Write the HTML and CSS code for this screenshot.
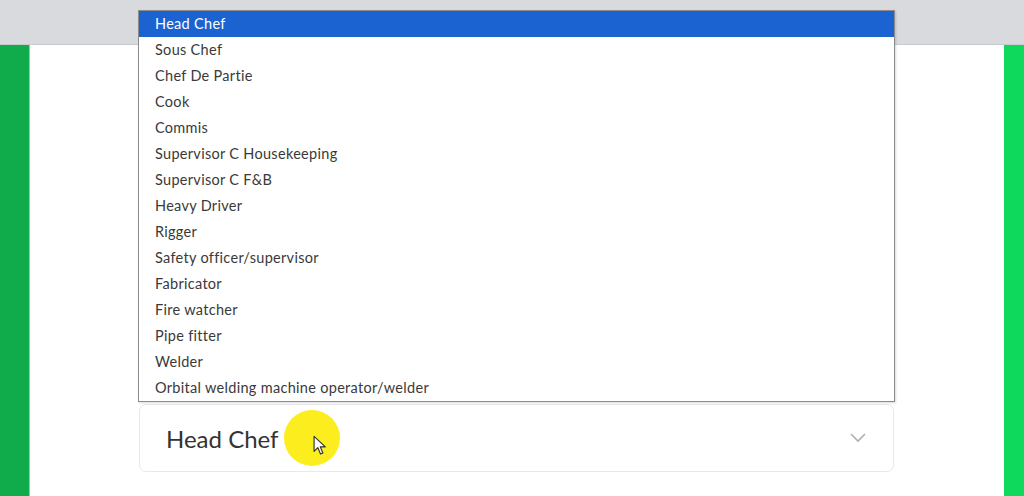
FILE: index.html
```html
<!DOCTYPE html>
<html lang="en">
<head>
    <meta charset="UTF-8">
    <title>Position</title>
    <link rel="stylesheet" href="styles.css">
</head>
<body>
    <div class="topbar"></div>
    <div class="page">
        <div class="side side-left"></div>
        <div class="main">
            <!-- closed select field -->
            <div class="select-box">
                <span class="select-value">Head Chef</span>
                <svg class="chevron" width="18" height="12" viewBox="0 0 18 12">
                    <path d="M2 2 L9 9 L16 2" fill="none" stroke="#b0b0b0" stroke-width="1.6"/>
                </svg>
                <span class="cursor-spot"></span>
                <svg class="cursor" width="15" height="22" viewBox="0 0 14 20">
                    <path d="M1 1 L1 15 L4.5 11.5 L7 17.5 L9.2 16.5 L6.8 10.8 L11.5 10.8 Z" fill="#fff" stroke="#333" stroke-width="1.1" stroke-linejoin="round"/>
                </svg>
            </div>
        </div>
        <div class="side side-right"></div>
    </div>

    <!-- open option list -->
    <ul class="option-list">
        <li class="selected">Head Chef</li>
        <li>Sous Chef</li>
        <li>Chef De Partie</li>
        <li>Cook</li>
        <li>Commis</li>
        <li>Supervisor C Housekeeping</li>
        <li>Supervisor C F&amp;B</li>
        <li>Heavy Driver</li>
        <li>Rigger</li>
        <li>Safety officer/supervisor</li>
        <li>Fabricator</li>
        <li>Fire watcher</li>
        <li>Pipe fitter</li>
        <li>Welder</li>
        <li>Orbital welding machine operator/welder</li>
    </ul>
</body>
</html>
```

FILE: styles.css
```css
body {
    margin: 0;
    padding: 0;
    font-family: Lato, "Open Sans", sans-serif;
    font-variant-ligatures: none;
    background-color: #fff;
    height: 496px;
    overflow: hidden;
    display: flex;
    flex-direction: column;
}
.topbar {
    height: 44px;
    background-color: #d9dadd;
    border-bottom: 1px solid #c9cacd;
}
.page {
    flex: 1;
    display: flex;
}
.side {
    flex: none;
}
.side-left {
    width: 29px;
    background-color: #10ac4b;
    border-right: 1px solid #7fdca0;
}
.side-right {
    width: 20px;
    background-color: #0fd95d;
}
.main {
    flex: 1;
    padding: 359px 0 0 109px;
    background-color: #fff;
}
.select-box {
    position: relative;
    width: 755px;
    height: 68px;
    border: 1px solid #e8e8e8;
    border-radius: 7px;
    display: flex;
    align-items: center;
    padding: 0 26px;
    box-sizing: border-box;
}
.select-value {
    flex: 1;
    font-size: 24px;
    color: #333;
}
.cursor-spot {
    position: absolute;
    left: 144px;
    top: 5px;
    width: 56px;
    height: 56px;
    border-radius: 50%;
    background-color: #fcee1e;
}
.cursor {
    position: absolute;
    left: 173px;
    top: 30px;
}
.option-list {
    position: absolute;
    left: 138px;
    top: 10px;
    width: 755px;
    margin: 0;
    padding: 0;
    list-style-type: none;
    background-color: #fff;
    border: 1px solid #8c8c8c;
    box-shadow: 1px 1px 2px rgba(0,0,0,0.15);
}
.option-list li {
    height: 26px;
    line-height: 26px;
    padding-left: 16px;
    font-size: 14.5px;
    letter-spacing: 0.3px;
    color: #3a3a3a;
}
.option-list li.selected {
    background-color: #1a63d0;
    color: #fff;
}
```
